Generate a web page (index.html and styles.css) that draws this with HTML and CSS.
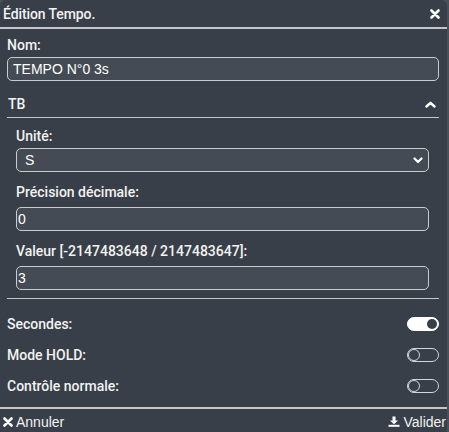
FILE: index.html
```
<!DOCTYPE html>
<html lang="fr">
<head>
    <meta charset="UTF-8">
    <meta name="viewport" content="width=device-width, initial-scale=1.0">
    <title>Édition Tempo.</title>
    <link rel="stylesheet" href="styles.css">
</head>
<body>

    <div class="dialog">
        <div class="dialog-header">
            <span class="dialog-title">Édition Tempo.</span>
            <span class="icon-close">
                <svg width="10" height="10" viewBox="0 0 10 10"><path d="M1.5 1.5 L8.5 8.5 M8.5 1.5 L1.5 8.5" stroke="#fff" stroke-width="2.6" stroke-linecap="round"/></svg>
            </span>
        </div>

        <div class="dialog-body">
            <div class="field">
                <label for="nom">Nom:</label>
                <input type="text" id="nom" class="text-input wide" value="TEMPO N°0 3s">
            </div>

            <div class="section">
                <div class="section-head">
                    <span>TB</span>
                    <svg width="11" height="7" viewBox="0 0 11 7"><path d="M1.5 5.5 L5.5 1.8 L9.5 5.5" fill="none" stroke="#fff" stroke-width="2.4" stroke-linecap="round" stroke-linejoin="round"/></svg>
                </div>
                <div class="section-body">
                    <div class="field">
                        <label for="unite">Unité:</label>
                        <div class="select-wrap">
                            <select id="unite" class="text-input select-input">
                                <option>S</option>
                                <option>MS</option>
                            </select>
                            <svg class="select-arrow" width="10" height="7" viewBox="0 0 10 7"><path d="M1.5 1.5 L5 5 L8.5 1.5" fill="none" stroke="#fff" stroke-width="2.2" stroke-linecap="round" stroke-linejoin="round"/></svg>
                        </div>
                    </div>
                    <div class="field spaced">
                        <label for="precision">Précision décimale:</label>
                        <input type="text" id="precision" class="text-input small" value="0">
                    </div>
                    <div class="field spaced">
                        <label for="valeur">Valeur [-2147483648 / 2147483647]:</label>
                        <input type="text" id="valeur" class="text-input small" value="3">
                    </div>
                </div>
            </div>

            <div class="toggles">
                <div class="toggle-row">
                    <span>Secondes:</span>
                    <span class="switch on"></span>
                </div>
                <div class="toggle-row">
                    <span>Mode HOLD:</span>
                    <span class="switch"></span>
                </div>
                <div class="toggle-row">
                    <span>Contrôle normale:</span>
                    <span class="switch"></span>
                </div>
            </div>
        </div>

        <div class="dialog-footer">
            <span class="footer-btn">
                <svg width="10" height="10" viewBox="0 0 10 10"><path d="M1.5 1.5 L8.5 8.5 M8.5 1.5 L1.5 8.5" stroke="#fff" stroke-width="2.6" stroke-linecap="round"/></svg>
                Annuler
            </span>
            <span class="footer-btn">
                <svg width="12" height="11" viewBox="0 0 12 11"><path d="M4.5 0.5 H7.5 V4.5 H10 L6 8.2 L2 4.5 H4.5 Z" fill="#fff"/><rect x="0.5" y="8.8" width="11" height="2" fill="#fff"/></svg>
                Valider
            </span>
        </div>
    </div>

</body>
</html>
```

FILE: styles.css
```
body {
    margin: 0;
    background-color: #4a5058;
    font-family: Roboto, "Liberation Sans", Arial, sans-serif;
    color: #f2f2f2;
}

.dialog {
    width: 447px;
    height: 432px;
    display: flex;
    flex-direction: column;
    background-color: #383f48;
    border-radius: 6px 6px 0 0;
}

.dialog-header {
    height: 27px;
    display: flex;
    align-items: center;
    justify-content: space-between;
    padding: 0 7px 0 3px;
    border-bottom: 2px solid #c4c6c9;
}

.dialog-title {
    font-size: 14px;
    font-weight: 500;
    letter-spacing: -0.1px;
}

.icon-close svg {
    display: block;
}

.dialog-body {
    padding: 8px 8px 0 7px;
}

.field label {
    display: block;
    height: 17px;
    line-height: 17px;
    font-size: 14px;
    font-weight: 500;
}

.field.spaced {
    margin-top: 12px;
}

.text-input {
    display: block;
    box-sizing: border-box;
    width: 100%;
    height: 24px;
    margin: 3px 0 0;
    border: 1px solid #c9cbce;
    border-radius: 5px;
    background-color: #454b54;
    color: #ffffff;
    font-family: "Liberation Sans", Arial, sans-serif;
    font-size: 14px;
    outline: none;
}

.text-input.wide {
    padding: 0 5px;
}

.text-input.small {
    margin-top: 6px;
    padding: 0 1px;
}

.select-wrap {
    position: relative;
}

.select-input {
    appearance: none;
    -webkit-appearance: none;
    padding: 0 8px;
}

.select-arrow {
    position: absolute;
    right: 6px;
    top: 9px;
}

.section {
    margin-top: 10px;
}

.section-head {
    height: 26px;
    display: flex;
    align-items: center;
    justify-content: space-between;
    padding: 0 3px 0 1px;
    border-bottom: 1px solid #c4c6c9;
    font-size: 14px;
    font-weight: 500;
}

.section-body {
    padding: 10px 10px 8px 9px;
    border-bottom: 1px solid #c4c6c9;
}

.toggles {
    padding-top: 9px;
}

.toggle-row {
    height: 31px;
    display: flex;
    align-items: center;
    justify-content: space-between;
    font-size: 14px;
    font-weight: 500;
}

.switch {
    position: relative;
    box-sizing: border-box;
    width: 32px;
    height: 14px;
    border: 1px solid #d4d6d9;
    border-radius: 7px;
}

.switch::after {
    content: "";
    position: absolute;
    left: 0;
    top: 0;
    box-sizing: border-box;
    width: 12px;
    height: 12px;
    border: 1px solid #d4d6d9;
    border-radius: 50%;
}

.switch.on {
    background-color: #ffffff;
    border-color: #ffffff;
}

.switch.on::after {
    left: auto;
    right: 1px;
    top: 1px;
    width: 10px;
    height: 10px;
    border: none;
    background-color: #383f48;
}

.dialog-footer {
    margin-top: auto;
    box-sizing: border-box;
    height: 25px;
    display: flex;
    align-items: center;
    justify-content: space-between;
    padding: 2px 1px 0 3px;
    border-top: 2px solid #c4c6c9;
    font-family: "Liberation Sans", Arial, sans-serif;
    font-size: 14px;
}

.footer-btn {
    display: flex;
    align-items: center;
    gap: 3px;
}

.footer-btn svg {
    display: block;
}
```
